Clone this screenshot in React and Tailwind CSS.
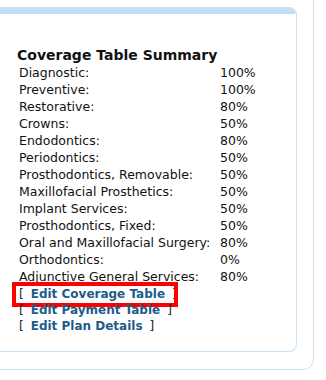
import React from 'react';

const rows = [
  ['Diagnostic:', '100%'],
  ['Preventive:', '100%'],
  ['Restorative:', '80%'],
  ['Crowns:', '50%'],
  ['Endodontics:', '80%'],
  ['Periodontics:', '50%'],
  ['Prosthodontics, Removable:', '50%'],
  ['Maxillofacial Prosthetics:', '50%'],
  ['Implant Services:', '50%'],
  ['Prosthodontics, Fixed:', '50%'],
  ['Oral and Maxillofacial Surgery:', '80%'],
  ['Orthodontics:', '0%'],
  ['Adjunctive General Services:', '80%'],
];

const EditLink = ({ label, highlight }) => (
  <div className="relative h-[16px] leading-[16px] pl-[18px] whitespace-nowrap">
    <span className="text-[#222]">[</span>
    <a href="#" className="ml-[7px] font-bold text-[#1c5d88] no-underline">{label}</a>
    <span className="ml-[7px] text-[#222]">]</span>
    {highlight && (
      <div className="absolute left-[11px] top-[-4px] w-[166px] h-[25px] border-[4px] border-[#ff0000]" />
    )}
  </div>
);

export default function App() {
  return (
    <div className="w-[326px] h-[380px] overflow-hidden bg-white" style={{ fontFamily: '"DejaVu Sans", Verdana, sans-serif' }}>
      <div className="ml-[-10px] mt-[-10px] w-[324px] h-[380px] border border-[#c6e0f7] rounded-br-[10px] pt-[16px]">
        <div className="w-[308px] ml-[-2px] h-[345px] border-r border-b border-[#c6e0f7] rounded-tr-[8px] rounded-br-[8px] overflow-hidden">
          <div className="h-[7px] bg-[#c2dff8]" />
          <div className="pt-[33px] text-[12.5px] text-[#111]">
            <div className="pl-[28px] font-bold text-[14px] leading-[17px] text-[#111]">Coverage Table Summary</div>
            <div className="pl-[30px] pt-[0px]">
              {rows.map(([label, value]) => (
                <div key={label} className="flex h-[17px] leading-[17px]">
                  <div className="w-[201px] whitespace-nowrap">{label}</div>
                  <div>{value}</div>
                </div>
              ))}
            </div>
            <div className="pl-[12px] pt-[1px] text-[12px]">
              <EditLink label="Edit Coverage Table" highlight />
              <EditLink label="Edit Payment Table" />
              <EditLink label="Edit Plan Details" />
            </div>
          </div>
        </div>
      </div>
    </div>
  );
}
